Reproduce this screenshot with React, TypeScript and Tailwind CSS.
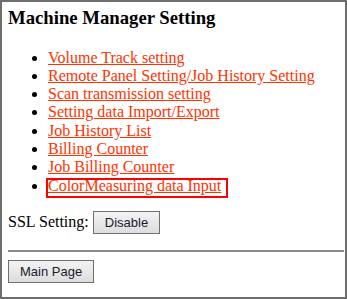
import React from 'react';

const links = [
  'Volume Track setting',
  'Remote Panel Setting/Job History Setting',
  'Scan transmission setting',
  'Setting data Import/Export',
  'Job History List',
  'Billing Counter',
  'Job Billing Counter',
];

const btn =
  "h-[23px] px-[11px] border border-[#707070] bg-gradient-to-b from-[#f3f3f3] to-[#dddddd] text-[13px] text-[#1a1a2e] font-['Liberation_Sans',Arial,sans-serif] leading-none";

export default function App() {
  return (
    <div className="w-[347px] h-[299px] border-2 border-[#6e6e6e] bg-white pl-[6px] pr-px pt-[5px] font-['Liberation_Serif','Times_New_Roman',serif] text-[16px] text-black overflow-hidden">
      <h3 className="m-0 text-[18.72px] font-bold leading-[21.5px]">Machine Manager Setting</h3>

      <ul className="mt-[20px] list-disc pl-[40px] leading-[18.3px]">
        {links.map((l) => (
          <li key={l}>
            <a href="#" className="text-[#ff3300] underline">
              {l}
            </a>
          </li>
        ))}
        <li>
          <a href="#" className="relative text-[#ff3300] underline">
            ColorMeasuring data Input
            {/* highlight frame */}
            <span className="absolute left-[-2px] right-[-7px] top-[1px] bottom-[-4.5px] border-2 border-[#ff0000] pointer-events-none" />
          </a>
        </li>
      </ul>

      <div className="mt-[16px] flex items-center leading-[18.4px]">
        <span>SSL Setting:</span>
        <button className={btn + ' ml-[4px]'}>Disable</button>
      </div>

      <hr className="mt-[16.5px] border-0 border-t-2 border-[#8a8a8a]" />

      <button className={btn + ' mt-[8px] h-[22px]'}>Main Page</button>
    </div>
  );
}
